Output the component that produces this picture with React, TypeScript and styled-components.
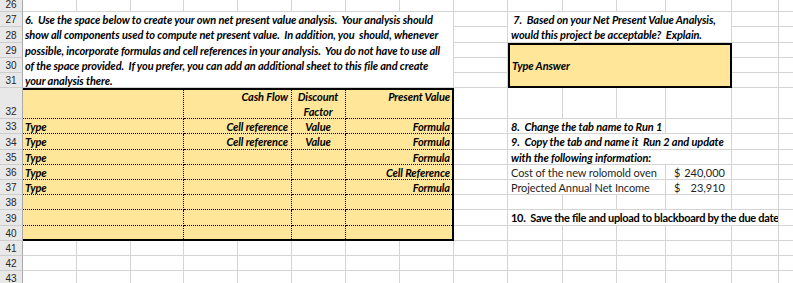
import React from "react";
import styled, { createGlobalStyle } from "styled-components";

// column widths: row header, then A..O
const COLS = [23, 54, 54, 53, 54, 54, 54, 54, 54, 54, 55, 54, 49, 66, 47, 54];
const LETTERS = "ABCDEFGHIJKLMNO";
const ROW_H = 15.2;
const ITALIC_SPACING = "-0.1px";

const ROWS: { n: number; h: number }[] = [];
for (let n = 26; n <= 43; n++) {
  ROWS.push({ n, h: n === 26 ? 12.3 : n === 32 ? 31 : ROW_H });
}

const col = (letter: string) => LETTERS.indexOf(letter) + 2;
const row = (n: number) => n - 26 + 1;

const GRID = "#d4d4d4";
const YELLOW = "#ffe699";

const GlobalStyle = createGlobalStyle`
  html, body {
    margin: 0;
    padding: 0;
    background: #fff;
    overflow: hidden;
  }
`;

const Sheet = styled.div`
  display: grid;
  grid-template-columns: ${COLS.map((w) => w + "px").join(" ")};
  grid-template-rows: ${ROWS.map((r) => r.h + "px").join(" ")};
  width: 793px;
  height: 283px;
  overflow: hidden;
  font-family: Lato, "Liberation Sans", sans-serif;
  font-size: 11px;
  color: #000;
`;

type AreaProps = {
  $r: number;
  $c: number;
  $rs?: number;
  $cs?: number;
};

const Area = styled.div<AreaProps>`
  grid-row: ${(p) => p.$r} / span ${(p) => p.$rs ?? 1};
  grid-column: ${(p) => p.$c} / span ${(p) => p.$cs ?? 1};
  box-sizing: border-box;
  min-width: 0;
  min-height: 0;
`;

const RowHead = styled(Area)`
  display: flex;
  align-items: flex-end;
  justify-content: center;
  background: #e8e8e8;
  border-bottom: 1px solid #cdcdcd;
  border-right: 1px solid #a9a9a9;
  font-family: "Liberation Sans", Arial, sans-serif;
  font-size: 10px;
  line-height: 12px;
  color: #262626;
`;

const Blank = styled(Area)`
  border-right: 1px solid ${GRID};
  border-bottom: 1px solid ${GRID};
`;

const TextBlock = styled(Area)<{ $pad?: number }>`
  background: #fff;
  border-right: 1px solid ${GRID};
  border-bottom: 1px solid ${GRID};
  padding-left: ${(p) => p.$pad ?? 2}px;
  font-weight: 700;
  font-style: italic;
  letter-spacing: ${ITALIC_SPACING};
  line-height: ${ROW_H}px;
  white-space: pre;
  overflow: hidden;
`;

const Line = styled.div`
  height: ${ROW_H}px;
`;

const InfoCell = styled(Area)<{ $plain?: boolean; $upright?: boolean }>`
  background: #fff;
  border-right: 1px solid ${GRID};
  border-bottom: 1px solid ${GRID};
  padding-left: 3px;
  line-height: ${ROW_H}px;
  white-space: pre;
  overflow: hidden;
  font-weight: ${(p) => (p.$plain ? 400 : 700)};
  font-style: ${(p) => (p.$plain || p.$upright ? "normal" : "italic")};
  letter-spacing: ${(p) => (p.$plain ? "-0.1px" : p.$upright ? "-0.3px" : ITALIC_SPACING)};
  color: ${(p) => (p.$plain ? "#1f1f1f" : "#000")};
`;

const Money = styled(Area)`
  display: flex;
  justify-content: space-between;
  background: #fff;
  border-right: 1px solid ${GRID};
  border-bottom: 1px solid ${GRID};
  padding: 0 6px 0 8px;
  line-height: ${ROW_H}px;
  color: #1f1f1f;
`;

const AnswerBox = styled(Area)`
  display: flex;
  align-items: center;
  background: ${YELLOW};
  border: 2px solid #000;
  padding-left: 2px;
  font-weight: 700;
  font-style: italic;
  letter-spacing: ${ITALIC_SPACING};
`;

const Table = styled(Area)`
  display: grid;
  grid-template-columns: 161px 108px 54px 108px;
  grid-template-rows: 31px repeat(8, ${ROW_H}px);
  background: ${YELLOW};
  box-shadow: inset 0 2px 0 #000, inset -2px 0 0 #000, inset 0 -2px 0 #000;
  font-weight: 700;
  font-style: italic;
  letter-spacing: ${ITALIC_SPACING};
`;

const TCell = styled.div<{
  $align: "left" | "center" | "right";
  $lastCol?: boolean;
  $lastRow?: boolean;
  $head?: boolean;
}>`
  box-sizing: border-box;
  text-align: ${(p) => p.$align};
  border-right: ${(p) => (p.$lastCol ? "none" : "1px dotted #000")};
  border-bottom: ${(p) => (p.$lastRow ? "none" : "1px dotted #000")};
  padding: ${(p) => (p.$head ? "1px" : "0")} ${(p) => (p.$lastCol ? 4 : 3)}px 0 2px;
  line-height: ${ROW_H}px;
  white-space: pre;
  overflow: hidden;
`;

const headCells: [string, "left" | "center" | "right"][] = [
  ["", "left"],
  ["Cash Flow", "right"],
  ["Discount\nFactor", "center"],
  ["Present Value", "right"],
];

const bodyRows: string[][] = [
  ["Type", "Cell reference", "Value", "Formula"],
  ["Type", "Cell reference", "Value", "Formula"],
  ["Type", "", "", "Formula"],
  ["Type", "", "", "Cell Reference"],
  ["Type", "", "", "Formula"],
  ["", "", "", ""],
  ["", "", "", ""],
  ["", "", "", ""],
];

const bodyAlign: ("left" | "center" | "right")[] = ["left", "right", "center", "right"];

const prompt6 = [
  "6.  Use the space below to create your own net present value analysis.  Your analysis should",
  "show all components used to compute net present value.  In addition, you  should, whenever",
  "possible, incorporate formulas and cell references in your analysis.  You do not have to use all",
  "of the space provided.  If you prefer, you can add an additional sheet to this file and create",
  "your analysis there.",
];

const prompt7 = [" 7.  Based on your Net Present Value Analysis,", "would this project be acceptable?  Explain."];

export default function App() {
  return (
    <>
      <GlobalStyle />
      <Sheet>
        {ROWS.map((r) => (
          <RowHead key={"h" + r.n} $r={row(r.n)} $c={1}>
            {r.n}
          </RowHead>
        ))}
        {ROWS.map((r) =>
          LETTERS.split("").map((l) => <Blank key={l + r.n} $r={row(r.n)} $c={col(l)} />)
        )}

        <TextBlock $r={row(27)} $rs={5} $c={col("A")} $cs={8}>
          {prompt6.map((t) => (
            <Line key={t}>{t}</Line>
          ))}
        </TextBlock>

        <TextBlock $r={row(27)} $rs={2} $c={col("J")} $cs={4} $pad={3}>
          {prompt7.map((t) => (
            <Line key={t}>{t}</Line>
          ))}
        </TextBlock>

        <AnswerBox $r={row(29)} $rs={3} $c={col("J")} $cs={4}>
          Type Answer
        </AnswerBox>

        <Table $r={row(32)} $rs={9} $c={col("A")} $cs={8}>
          {headCells.map(([t, a], i) => (
            <TCell key={"th" + i} $align={a} $lastCol={i === 3} $head>
              {t}
            </TCell>
          ))}
          {bodyRows.map((cells, ri) =>
            cells.map((t, ci) => (
              <TCell
                key={ri + "-" + ci}
                $align={bodyAlign[ci]}
                $lastCol={ci === 3}
                $lastRow={ri === bodyRows.length - 1}
              >
                {t}
              </TCell>
            ))
          )}
        </Table>

        <InfoCell $r={row(33)} $c={col("J")} $cs={3}>
          8.  Change the tab name to Run 1
        </InfoCell>
        <InfoCell $r={row(34)} $c={col("J")} $cs={4}>
          9.  Copy the tab and name it  Run 2 and update
        </InfoCell>
        <InfoCell $r={row(35)} $c={col("J")} $cs={4}>
          with the following information:
        </InfoCell>
        <InfoCell $r={row(36)} $c={col("J")} $cs={3} $plain>
          Cost of the new rolomold oven
        </InfoCell>
        <Money $r={row(36)} $c={col("M")}>
          <span>$</span>
          <span>240,000</span>
        </Money>
        <InfoCell $r={row(37)} $c={col("J")} $cs={3} $plain>
          Projected Annual Net Income
        </InfoCell>
        <Money $r={row(37)} $c={col("M")}>
          <span>$</span>
          <span>23,910</span>
        </Money>
        <InfoCell $r={row(39)} $c={col("J")} $cs={5} $upright>
          10.  Save the file and upload to blackboard by the due date
        </InfoCell>
      </Sheet>
    </>
  );
}
